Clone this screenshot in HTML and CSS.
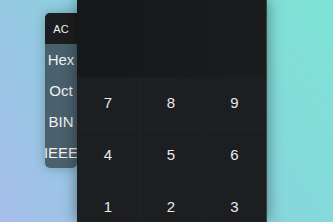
FILE: index.html
```html
<!DOCTYPE html>
<html lang="en">
<head>
  <meta charset="UTF-8">
  <meta name="viewport" content="width=device-width, initial-scale=1.0">
  <title>Calculator</title>
  <link rel="stylesheet" href="styles.css">
</head>
<body>
  <div class="stage">
    <div class="modes">
      <button class="mode clear">AC</button>
      <button class="mode">Hex</button>
      <button class="mode">Oct</button>
      <button class="mode">BIN</button>
      <button class="mode">IEEE</button>
    </div>
    <div class="calculator">
      <div class="display"></div>
      <div class="keys">
        <button class="key">7</button>
        <button class="key">8</button>
        <button class="key">9</button>
        <button class="key">4</button>
        <button class="key">5</button>
        <button class="key">6</button>
        <button class="key">1</button>
        <button class="key">2</button>
        <button class="key">3</button>
      </div>
    </div>
  </div>
</body>
</html>
```

FILE: styles.css
```css
html, body {
  margin: 0;
  height: 100%;
  overflow: hidden;
}
body {
  background: linear-gradient(60deg, #a6bdea 0%, #8cd0df 45%, #7de4d5 100%);
  font-family: "Liberation Sans", Arial, sans-serif;
  color: #eee;
}
.stage {
  display: flex;
  align-items: flex-start;
  padding-left: 45px;
  height: 100%;
}
.modes {
  width: 32px;
  margin-top: 13px;
  display: flex;
  flex-direction: column;
  background-color: rgba(60, 78, 88, 0.85);
  border-radius: 5px;
  box-shadow: 0 0 12px rgba(0, 0, 0, 0.25);
  overflow: visible;
}
.mode {
  height: 31px;
  padding: 0;
  border: none;
  background: none;
  color: #f2f2f2;
  font-family: inherit;
  font-size: 15px;
  display: flex;
  justify-content: center;
  align-items: center;
  white-space: nowrap;
  overflow: visible;
}
.mode.clear {
  background-color: #1c1d1f;
  border-radius: 5px 0 0 0;
  font-size: 11px;
}
.calculator {
  width: 189px;
  height: 100%;
  background-color: #1c1d1f;
  box-shadow: 0 0 14px rgba(0, 0, 0, 0.45);
  border-right: 1px solid #3b4446;
  position: relative;
}
.display {
  height: 77px;
  background: linear-gradient(90deg, #161719, #1b1c1e);
}
.keys {
  display: grid;
  grid-template-columns: repeat(3, 1fr);
  grid-auto-rows: 52px;
}
.key {
  border: none;
  border-right: 1px solid #212224;
  border-bottom: 1px solid #212224;
  background-color: #1d1e20;
  color: #eaeaea;
  font-family: inherit;
  font-size: 15px;
  padding: 0;
}
.key:nth-child(3n) {
  border-right: none;
}
```
